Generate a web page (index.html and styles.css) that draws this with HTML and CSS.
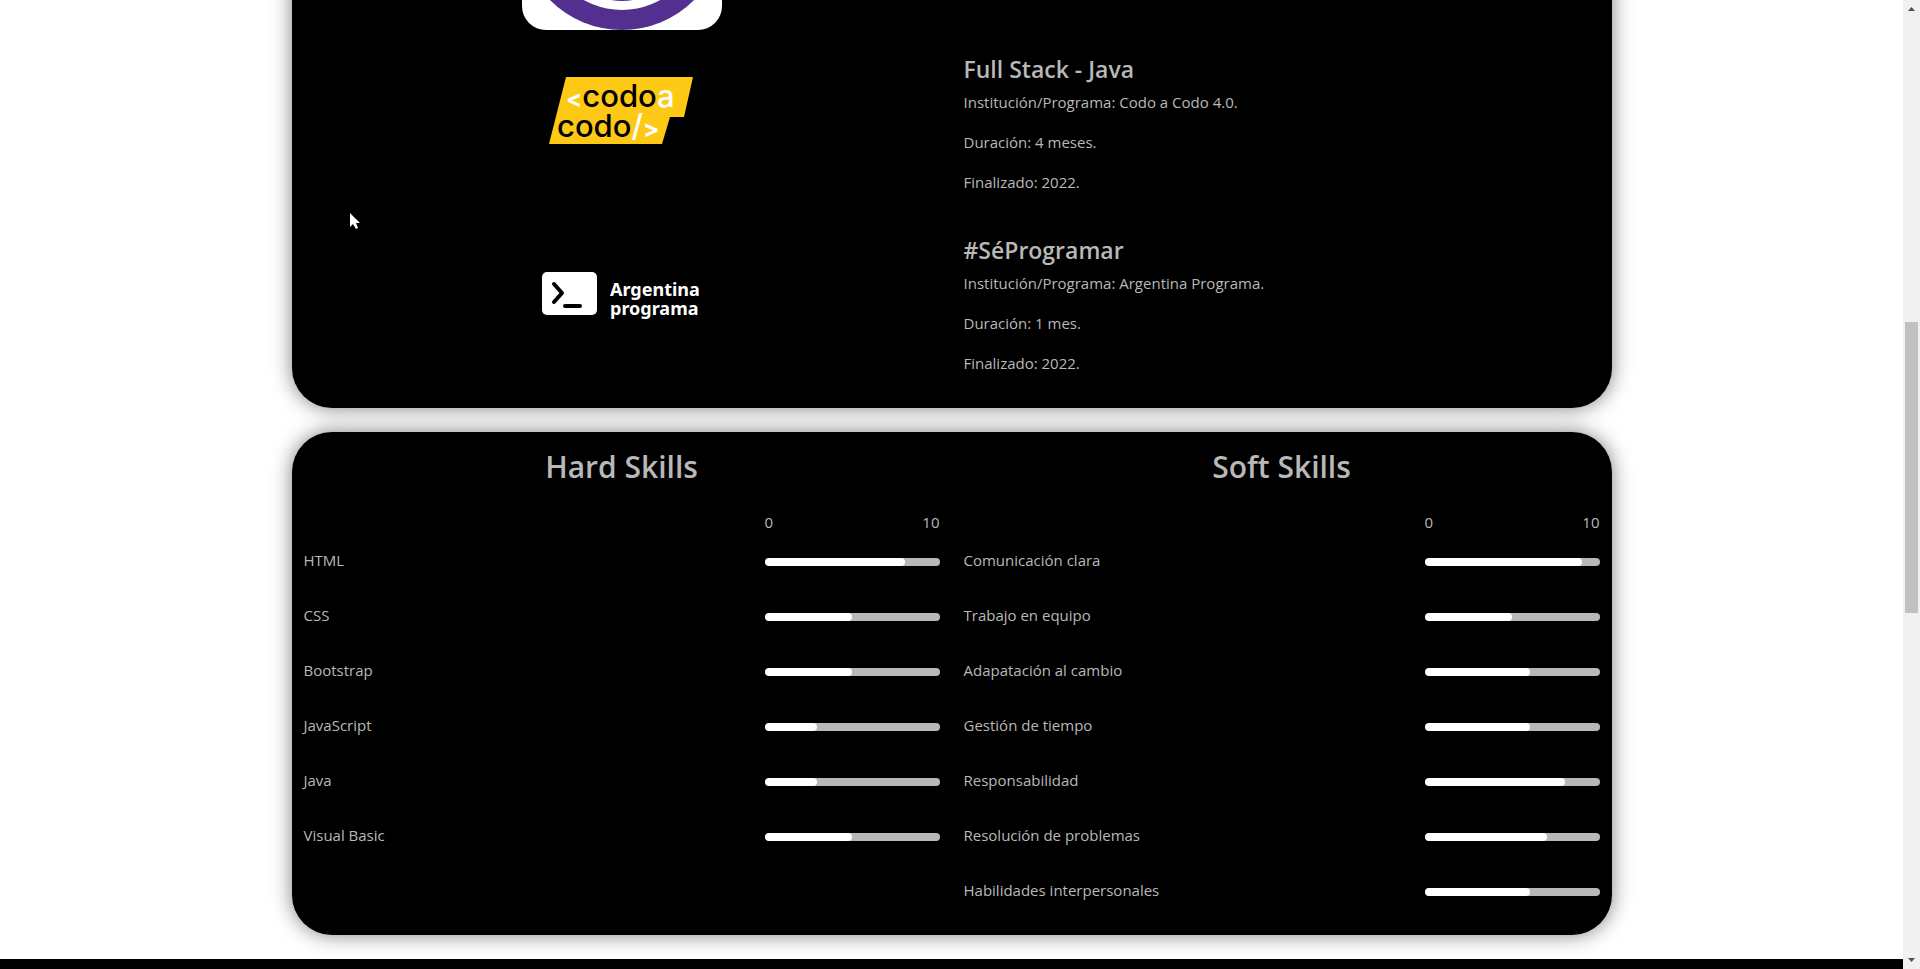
FILE: index.html
```html
<!DOCTYPE html>
<html lang="es">
<head>
<meta charset="utf-8">
<title>Portfolio</title>
<link rel="stylesheet" href="styles.css">
</head>
<body>
<div class="page">
  <main class="container">
    <section class="card education">
      <div class="row">
        <div class="logo">
          <svg class="badge" viewBox="0 0 200 200" role="img" aria-label="Institución">
            <rect width="200" height="200" rx="24" fill="#fff"/>
            <circle cx="100" cy="98" r="102" fill="#53308f"/>
            <circle cx="100" cy="102" r="78" fill="#fff"/>
            <circle cx="100" cy="111" r="60" fill="#53308f"/>
          </svg>
        </div>
      </div>
      <div class="row">
        <div class="logo">
          <svg class="codo" viewBox="0 0 200 116" role="img" aria-label="Codo a Codo">
            <path d="M44 23H171L162 63H148L140 90H27Z" fill="#fdc914"/>
            <text class="codo-text" x="44" y="53"><tspan class="mark">&lt;</tspan>codo<tspan class="light">a</tspan></text>
            <text class="codo-text" x="35" y="83">codo<tspan class="light">/</tspan><tspan class="mark">&gt;</tspan></text>
          </svg>
        </div>
        <div class="detail">
          <h4>Full Stack - Java</h4>
          <p>Institución/Programa: Codo a Codo 4.0.</p>
          <p>Duración: 4 meses.</p>
          <p>Finalizado: 2022.</p>
        </div>
      </div>
      <div class="row">
        <div class="logo">
          <svg class="codo" viewBox="0 0 200 116" role="img" aria-label="Argentina programa">
            <rect x="20" y="37" width="55" height="43" rx="5" fill="#fff"/>
            <path d="M32 49L40 58L32 67M43 71H58" fill="none" stroke="#000" stroke-width="4" stroke-linecap="round" stroke-linejoin="round"/>
            <text class="argentina-text" x="88" y="61">Argentina</text>
            <text class="argentina-text" x="88" y="80">programa</text>
          </svg>
        </div>
        <div class="detail">
          <h4>#SéProgramar</h4>
          <p>Institución/Programa: Argentina Programa.</p>
          <p>Duración: 1 mes.</p>
          <p>Finalizado: 2022.</p>
        </div>
      </div>
    </section>

    <section class="card skills">
      <div class="skill-list">
        <h2>Hard Skills</h2>
        <div class="scale"><span>0</span><span>10</span></div>
        <div class="skill"><label for="h1">HTML</label><progress id="h1" max="10" value="8"></progress></div>
        <div class="skill"><label for="h2">CSS</label><progress id="h2" max="10" value="5"></progress></div>
        <div class="skill"><label for="h3">Bootstrap</label><progress id="h3" max="10" value="5"></progress></div>
        <div class="skill"><label for="h4">JavaScript</label><progress id="h4" max="10" value="3"></progress></div>
        <div class="skill"><label for="h5">Java</label><progress id="h5" max="10" value="3"></progress></div>
        <div class="skill"><label for="h6">Visual Basic</label><progress id="h6" max="10" value="5"></progress></div>
      </div>
      <div class="skill-list">
        <h2>Soft Skills</h2>
        <div class="scale"><span>0</span><span>10</span></div>
        <div class="skill"><label for="s1">Comunicación clara</label><progress id="s1" max="10" value="9"></progress></div>
        <div class="skill"><label for="s2">Trabajo en equipo</label><progress id="s2" max="10" value="5"></progress></div>
        <div class="skill"><label for="s3">Adapatación al cambio</label><progress id="s3" max="10" value="6"></progress></div>
        <div class="skill"><label for="s4">Gestión de tiempo</label><progress id="s4" max="10" value="6"></progress></div>
        <div class="skill"><label for="s5">Responsabilidad</label><progress id="s5" max="10" value="8"></progress></div>
        <div class="skill"><label for="s6">Resolución de problemas</label><progress id="s6" max="10" value="7"></progress></div>
        <div class="skill"><label for="s7">Habilidades interpersonales</label><progress id="s7" max="10" value="6"></progress></div>
      </div>
    </section>
  </main>
  <footer class="footer"></footer>
</div>
<div class="scrollbar" aria-hidden="true">
  <svg viewBox="0 0 17 17"><path d="M5 11L8.500 7L12 11Z" fill="#505050"/></svg>
  <span></span>
  <span class="thumb"></span>
  <span></span>
  <svg viewBox="0 0 17 17"><path d="M5 6L8.500 10L12 6Z" fill="#505050"/></svg>
</div>
<svg class="cursor" viewBox="0 0 12 18" aria-hidden="true"><path d="M0 0V14L3 11L6 16L8 15L6 10H10Z" fill="#fff"/></svg>
</body>
</html>
```
FILE: styles.css
```css
* { box-sizing: border-box; }

body {
  margin: 0;
  height: 100vh;
  display: flex;
  overflow: hidden;
  position: relative;
  background: #fff;
  color: #b8b8b8;
  font: 15px/24px "Segoe UI", "Open Sans", "Noto Sans", sans-serif;
}

.page {
  flex: 1;
  display: flex;
  flex-direction: column;
  overflow: hidden;
}

.container {
  width: 100%;
  max-width: 1320px;
  margin: 0 auto;
  display: flex;
  flex-direction: column;
  gap: 24px;
  padding-bottom: 24px;
}

.card {
  background: #000;
  border-radius: 40px;
  box-shadow: 0 0 20px rgba(0, 0, 0, .5);
}

/* The first card is scrolled partly out of view. */
.education {
  margin-top: -194px;
  padding: 24px 0 16px;
  display: grid;
  gap: 24px;
}

.row, .skills {
  display: grid;
  grid-template-columns: 1fr 1fr;
}

.logo svg { display: block; margin: 0 auto; }
.badge, .codo { width: 200px; }

.codo-text {
  font: 500 31px/1 Inter, sans-serif;
  fill: #000;
}
.light { fill: #fff; }
.mark {
  fill: #fff;
  font-size: 24px;
  font-weight: 700;
}

.argentina-text {
  font: 700 18px/1 "Noto Sans", sans-serif;
  fill: #fff;
}

.detail { padding: 0 12px 1px; }

h2, h4 {
  margin: 0;
  font-weight: 600;
}
h2 {
  font-size: 30px;
  line-height: 38px;
  text-align: center;
  margin-bottom: 24px;
}
h4 {
  font-size: 23px;
  line-height: 31px;
  margin-bottom: 5px;
}
p { margin: 0 0 16px; }

.skills { padding: 16px 0; }
.skill-list { padding: 0 12px; }

.scale {
  display: flex;
  justify-content: space-between;
  width: 175px;
  margin-left: auto;
}

.skill {
  display: flex;
  align-items: center;
  justify-content: space-between;
  height: 55px;
}
.skill label { padding-bottom: 3px; }

progress {
  appearance: none;
  display: block;
  width: 175px;
  height: 8px;
  border: 0;
  border-radius: 4px;
  overflow: hidden;
}
progress::-webkit-progress-bar { background: #b8b8b8; }
progress::-webkit-progress-value {
  background: #fff;
  border-radius: 4px;
}

.footer {
  flex: 1;
  background: #000;
}

.scrollbar {
  width: 17px;
  background: #f1f1f1;
  display: grid;
  grid-template-rows: 17px 305fr 291fr 339fr 17px;
}
.scrollbar svg { width: 17px; height: 17px; }
.thumb {
  background: #c1c1c1;
  margin: 0 2px;
}

.cursor {
  position: absolute;
  left: 350px;
  top: 213px;
  width: 12px;
  height: 18px;
}
```
